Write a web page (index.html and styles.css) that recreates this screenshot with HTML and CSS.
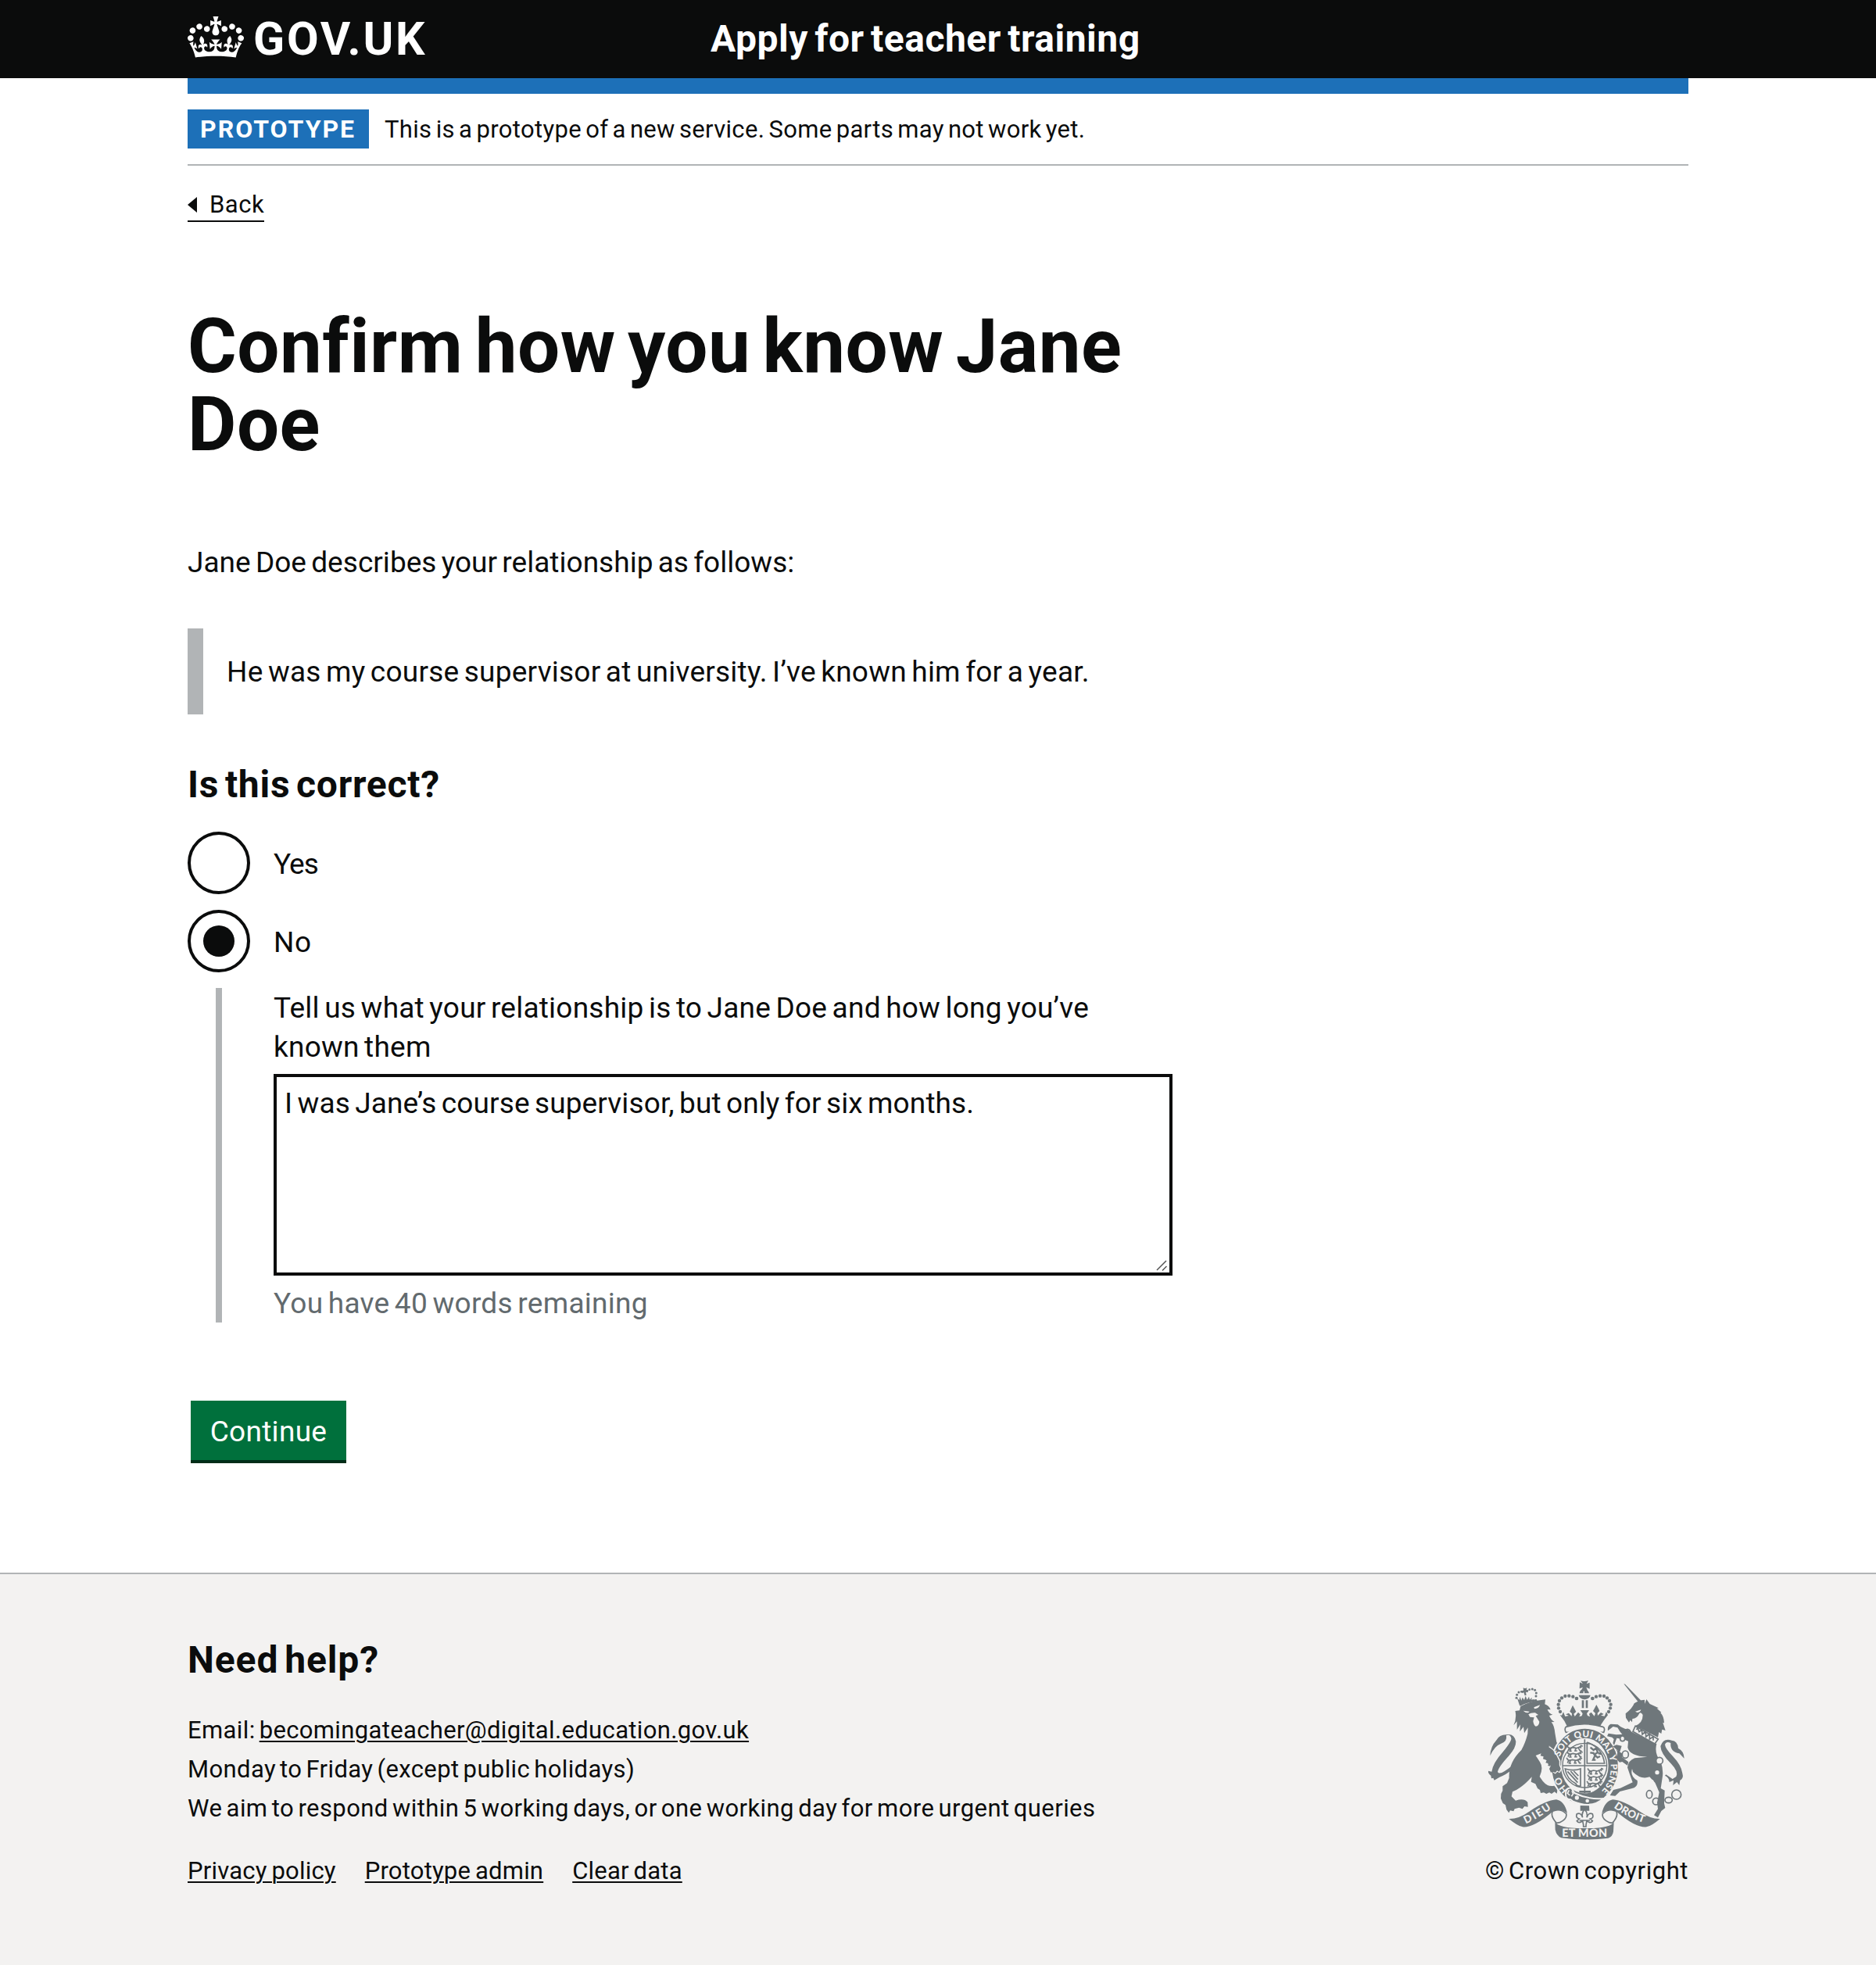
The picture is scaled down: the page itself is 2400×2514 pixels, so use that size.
FILE: index.html
```html
<!DOCTYPE html>
<html lang="en">
<head>
<meta charset="utf-8">
<title>Confirm how you know Jane Doe - Apply for teacher training</title>
<link rel="stylesheet" href="styles.css">
</head>
<body>
<header class="header">
  <div class="container header-row">
    <a class="logo" href="#">
      <svg class="crown" viewBox="0 0 132 97" aria-hidden="true"><path fill="currentColor" fill-rule="evenodd" d="M25 30.2c3.5 1.5 7.7-.2 9.1-3.7 1.5-3.6-.2-7.8-3.9-9.2-3.6-1.4-7.6.3-9.1 3.9-1.4 3.5.3 7.5 3.9 9zM9 39.5c3.6 1.5 7.8-.2 9.2-3.7 1.5-3.6-.2-7.8-3.9-9.1-3.6-1.5-7.6.2-9.1 3.8-1.4 3.5.3 7.5 3.8 9zM4.4 57.2c3.5 1.5 7.7-.2 9.1-3.8 1.5-3.6-.2-7.7-3.9-9.1-3.5-1.5-7.6.3-9.1 3.8-1.4 3.5.3 7.6 3.9 9.1zm38.3-21.4c3.5 1.5 7.7-.2 9.1-3.8 1.5-3.6-.2-7.7-3.9-9.1-3.6-1.5-7.6.3-9.1 3.8-1.3 3.6.4 7.7 3.9 9.1zm64.4-5.6c-3.6 1.5-7.8-.2-9.1-3.7-1.5-3.6.2-7.8 3.8-9.2 3.6-1.4 7.7.3 9.2 3.9 1.3 3.5-.4 7.5-3.9 9zm15.9 9.3c-3.6 1.5-7.7-.2-9.1-3.7-1.5-3.6.2-7.8 3.7-9.1 3.6-1.5 7.7.2 9.2 3.8 1.5 3.5-.3 7.5-3.8 9zm4.7 17.7c-3.6 1.5-7.8-.2-9.2-3.8-1.5-3.6.2-7.7 3.9-9.1 3.6-1.5 7.7.3 9.2 3.8 1.3 3.5-.4 7.6-3.9 9.1zM89.3 35.8c-3.6 1.5-7.8-.2-9.2-3.8-1.4-3.6.2-7.7 3.9-9.1 3.6-1.5 7.7.3 9.2 3.8 1.4 3.6-.3 7.7-3.9 9.1zM69.7 17.7l8.9 4.7V9.3l-8.9 2.8c-.2-.3-.5-.6-.9-.9L72.4 0H59.6l3.5 11.2c-.3.3-.6.5-.9.9l-8.8-2.8v13.1l8.8-4.7c.3.3.6.7.9.9l-5 15.4v.1c-.2.8-.4 1.6-.4 2.4 0 4.1 3.1 7.5 7 8.1h.2c.3 0 .7.1 1 .1.4 0 .7 0 1-.1h.2c4-.6 7.1-4.1 7.1-8.1 0-.8-.1-1.7-.4-2.4V34l-5.1-15.4c.4-.2.7-.6 1-.9zM66 92.8c16.9 0 32.8 1.1 47.1 3.2 4-16.9 8.9-26.7 14-33.5l-9.6-3.4c1 4.9 1.1 7.2 0 10.2-1.5-1.4-3-4.3-4.2-8.7L108.6 76c2.8-2 5-3.2 7.5-3.3-4.4 9.4-10 11.9-13.6 11.2-4.3-.8-6.3-4.6-5.6-7.9 1-4.7 5.7-5.9 8-.5 4.3-8.7-3-11.4-7.6-8.8 7.1-7.2 7.9-13.5 2.1-21.1-8 6.1-8.1 12.3-4.5 20.8-4.7-5.4-12.1-2.5-9.5 6.2 3.4-5.2 7.9-2 7.2 3.1-.6 4.3-6.4 7.8-13.5 7.2-10.3-.9-10.9-8-11.2-13.8 2.5-.5 7.1 1.8 11 7.3L80.2 60c-4.1 4.4-8 5.3-12.3 5.4 1.4-4.4 8-11.6 8-11.6H55.5s6.4 7.2 7.9 11.6c-4.2-.1-8-1-12.3-5.4l1.4 16.4c3.9-5.5 8.5-7.7 10.9-7.3-.3 5.8-.9 12.8-11.1 13.8-7.2.6-12.9-2.9-13.5-7.2-.7-5 3.8-8.3 7.1-3.1 2.7-8.7-4.6-11.6-9.4-6.2 3.7-8.5 3.6-14.7-4.6-20.8-5.8 7.6-5 13.9 2.2 21.1-4.7-2.6-11.9.1-7.7 8.8 2.3-5.5 7.1-4.2 8.1.5.7 3.3-1.3 7.1-5.7 7.9-3.5.7-9-1.8-13.5-11.2 2.5.1 4.7 1.3 7.5 3.3l-4.7-15.4c-1.2 4.4-2.7 7.2-4.3 8.7-1.1-3-.9-5.3 0-10.2l-9.5 3.4c5 6.9 9.9 16.7 14 33.5 14.8-2.1 30.8-3.2 47.7-3.2z"/></svg>
      <span class="logo-text">GOV.UK</span>
    </a>
    <a class="service-name" href="#">Apply for teacher training</a>
  </div>
</header>
<div class="container">
  <div class="header-bar"></div>
  <div class="phase-banner">
    <strong class="tag">PROTOTYPE</strong>
    <span class="phase-text">This is a prototype of a new service. Some parts may not work yet.</span>
  </div>
  <a class="back-link" href="#"><svg class="back-arrow" viewBox="0 0 12 20" aria-hidden="true"><path d="M12 0v20L0 10z"/></svg><span>Back</span></a>
  <main class="main">
    <h1>Confirm how you know Jane Doe</h1>
    <p class="intro">Jane Doe describes your relationship as follows:</p>
    <blockquote class="inset">He was my course supervisor at university. I’ve known him for a year.</blockquote>
    <h2 class="question">Is this correct?</h2>
    <div class="radios">
      <label class="radio"><span class="radio-circle"></span><span class="radio-label radio-yes">Yes</span></label>
      <label class="radio"><span class="radio-circle radio-checked"></span><span class="radio-label">No</span></label>
    </div>
    <div class="conditional">
      <label class="detail-label" for="detail">Tell us what your relationship is to Jane Doe and how long you’ve known them</label>
      <div class="textarea-wrap">
        <textarea id="detail" class="textarea">I was Jane’s course supervisor, but only for six months.</textarea>
        <svg class="grip" viewBox="0 0 14 14" aria-hidden="true"><path d="M1 13L13 1M8 13.500L13.500 8"/></svg>
      </div>
      <div class="count">You have 40 words remaining</div>
    </div>
    <button class="button">Continue</button>
  </main>
</div>
<footer class="footer">
  <div class="container footer-row">
    <div>
      <h2 class="help">Need help?</h2>
      <ul class="contact">
        <li>Email: <a class="email" href="#">becomingateacher@digital.education.gov.uk</a></li>
        <li>Monday to Friday (except public holidays)</li>
        <li class="aim">We aim to respond within 5 working days, or one working day for more urgent queries</li>
      </ul>
      <nav class="links"><a href="#">Privacy policy</a><a href="#">Prototype admin</a><a href="#">Clear data</a></nav>
    </div>
    <div class="copyright">
      <svg class="crest" viewBox="56 49 780 636" aria-hidden="true">
        <defs>
          <path id="garter" d="M342 357A101 117 0 1 1 500 487"/>
          <path id="garter-start" d="M376 481A100 116 0 0 1 339 400"/>
          <path id="scroll-left" d="M212 611Q262 588 314 551"/>
          <path id="scroll-right" d="M549 548Q605 590 680 612"/>
          <g id="passant" fill="none" stroke-width="5"><path d="M2 5l9 5 12-3 14 3 12-5 6 4M8 11l-4 9M16 9l-5 12h7M34 10l-3 10h8M44 9l6 11h6M50 6l4-6 6 3M4 4l-4-4"/></g>
        </defs>
        <g class="ink">
          <!-- small crown on the lion -->
          <path d="M182 138l-3-9 8 7 2-13 6 15 4-12 7 10 5-16 6 15 7-12 3 12 8-9-1 11 8-5-2 10q-28 2-52 14z"/>
          <path d="M202 89l7 3 7-3-1 8 8 1-4 9-7-2 2 12-6 2-4-12-7 3-1-9 7-2z"/>
          <g><circle cx="176" cy="128" r="4.500"/><circle cx="178" cy="116" r="4.500"/><circle cx="185" cy="106" r="4.500"/><circle cx="195" cy="104" r="4"/><circle cx="226" cy="96" r="4"/><circle cx="237" cy="94" r="4.500"/><circle cx="247" cy="98" r="4.500"/><circle cx="252" cy="109" r="4.500"/><circle cx="251" cy="121" r="4.500"/></g>
          <path d="M187 151q31-14 66-18l3 7q-36 4-66 19z"/>
          <!-- lion -->
          <path d="M171 178l17-2 4-16q34-18 74-23l21-3-2 18q17 6 22 21l-12-1q5 16 20 20l-13 4q6 16 20 24l-12 1q11 12 14 42l6 35 12 15-12 12-10 2-20-17q25 36 40 53l4 26 10 13-6 15-8-3-11 5-8-5-10 1-4-10 3-14-14-3 6-8-14-3 4-10-14-5 2-9-12-3 3-9-21 8 16 25q15 22-1 56l12 17q20 24 44 18l13 13-3 17-9-7-11 8-9-5-11 5-10-5-12 2-3-12-9-6-8-17-17-8 3-19q-37 42-74 57l-4 18 16 16q32-11 46 6l1 18-13-2-8 10-13-5-17 5-4 9-13-3-5 9-9-12-4-18-10-7-8-18 1-18 6-12 0-17 17-12 8-20q-3-59 47-107 15-26 24-62l1-24-14 21-3-24-14 18 2-27-13 20 0-32-13 15q12-24 7-53z"/>
          <path d="M75 350q1-35 25-61 10-19 37-20 30-6 37 26 1 24-28 56-39 42-42 60 5 19 59-26l4 13q-35 28-56 34l-20 12-4-9-7 2-2-11q-12-9-10-18l13 3q5-34 44-77 34-42 31-52-5-17-19-10 4 24-20 31-25 9-42 47z"/>
          <g class="cut"><path d="M202 177l24 3q-8 11-24-3zM243 164l23-9q-3 14-21 15zM222 191q9-7 26-6l12 8-10 4 14 22q-1 17-14 18-8-4-10-20l4-14-16-2z"/></g>
          <!-- unicorn -->
          <path d="M588 74l5 1 76 78-13 6z"/>
          <path d="M668 151l7-18 13 18 34 16-7 1 17 15-3 2q13 14 14 39l-5-1 10 30-13-4-3 16-9-6-4 20-87-44q29-11 29-42-9-16-16-1-6 13-24 16l-1 13-7-8-5 9-12-18-1-16q26-20 33-39 14-12 40-14z"/>
          <path class="cut" d="M632 180l22-7q-2 10-14 11z"/>
          <path d="M624 261l90 43q-10 38 16 68 10 30 7 56l-7 47 15 8-2 50 4 17-15 12-13 25-15-9 15-24-3-24 8-40-16-37-21-22q-33 12-64-19l-3-12q-9 28 20 45 4 25-20 30l-47 12-18 17-20-2 13-21 27-7 47-22q-12-33-20-57 3-27 28-36l48-5q-68-3-75-36l2-24-19-8-25-4-7 19-5 15 17 16 18 10-4 13-19-15-19-22 8-32-7-7-19-4 5-11 30 5 23-1q-10-11-18-26l-17-4-20 16q-3-20 11-26l27 2q16 15 38 19z"/>
          <path d="M820 360q-1-28-23-39-3-29-25-30-32-11-43 22 1 29 40 67 30 31 20 50l-14 9-25-17-4 4q17 8 17 25l16-7-2 19 15-12 9 12 3-19q15-7 9-27-4-30-36-64-30-31-31-46 5-15 22-6-3 34 33 40z"/>
          <g class="line" stroke-width="5"><path d="M632 236l88 50-13 18-84-47z" class="cut-fill"/><path d="M637 250l4-8 6 16 10-8 2 18 13-11 1 20 14-11 0 20 14-9 0 14"/><ellipse cx="602" cy="261" rx="12" ry="13"/><ellipse cx="583" cy="284" rx="9" ry="10" class="cut-fill"/><circle cx="725" cy="369" r="13" class="cut-fill"/><ellipse cx="686" cy="498" rx="11" ry="15"/><circle cx="712" cy="525" r="13"/><circle cx="790" cy="499" r="18"/><ellipse cx="760" cy="520" rx="14" ry="11"/></g>
          <g class="cut"><circle cx="716" cy="414" r="8"/><circle cx="694" cy="450" r="9"/></g>
          <!-- crown -->
          <path d="M422 62q15 5 30-1l-7 13 12-5v24l-13-6 6 15h-27l8-15-13 5 1-24 12 6zM418 110q1-13 15-17v17zM437 93q15 4 18 17h-18zM415 117h45q-2 14-22 17-20-3-23-17zM427 137h8v30h-8zM442 137h8v30h-8z"/>
          <g><circle cx="407" cy="130" r="7"/><circle cx="393" cy="123" r="6.500"/><circle cx="378" cy="120" r="6.500"/><circle cx="363" cy="121" r="6.500"/><circle cx="350" cy="128" r="6.500"/><circle cx="341" cy="139" r="6.500"/><circle cx="337" cy="153" r="6.500"/><circle cx="338" cy="167" r="6.500"/><circle cx="344" cy="181" r="6.500"/><circle cx="468" cy="130" r="7"/><circle cx="482" cy="123" r="6.500"/><circle cx="497" cy="120" r="6.500"/><circle cx="512" cy="121" r="6.500"/><circle cx="524" cy="128" r="6.500"/><circle cx="533" cy="139" r="6.500"/><circle cx="538" cy="153" r="6.500"/><circle cx="536" cy="167" r="6.500"/><circle cx="530" cy="181" r="6.500"/></g>
          <path d="M350 195l6-13 7 17 14-3-12-5 12-5 11 12 1-10-8-8 4-9 7-15 8 15 5 10-9 8 4 10 13-16 8 8-4 9 10-3 3-9-9-13h34l-9 13 3 8 9 4-3-11 8-6 12 15 4-11-9-9 5-9 8-15 8 15 4 9-8 8 1 10 12-12 11 6-11 5 14 3 7-17 6 13q-22 27-30 44-62-21-126 0-9-22-28-45z"/>
          <path class="line cut-fill" stroke-width="5" d="M366 239q70-22 142 0 10 5 3 21h-145q-7-13 0-21z"/>
          <!-- garter and shield -->
          <ellipse class="rim" cx="439" cy="391" rx="130" ry="148"/>
          <ellipse class="cut" cx="438" cy="388" rx="91" ry="106"/>
          <circle class="line" cx="438" cy="387" r="85" stroke-width="4"/>
          <path class="line" stroke-width="5" d="M438 287v206M353 388h171M447 298v81h67q-8-60-67-81"/>
          <g class="line" stroke-width="5"><use href="#passant" x="370" y="311"/><use href="#passant" x="370" y="334"/><use href="#passant" x="368" y="358"/><use href="#passant" x="449" y="399"/><use href="#passant" x="449" y="423"/><use href="#passant" x="446" y="448"/><path stroke-width="7" d="M460 318l12 10 10-7 6 16-13 8 12 12 10-5M475 340l-16-2M478 348l-8 18h10M490 340l12 3"/><path d="M363 400q32 10 59 0v66q-16 2-18-9-35-17-41-57zM372 410l39 43M384 409l28 32M396 409l18 18"/></g>
          <path d="M417 484h44v8h-44z"/>
          <path class="rim" d="M366 487q5-17 21-13l12 19q50 25 111 21-46 41-117 11l-9-7q-23 2-18-31z"/>
          <g class="cut"><circle cx="408" cy="511" r="8"/><circle cx="448" cy="523" r="7"/></g>
          <path class="line cut-stroke" stroke-width="5" d="M378 482l-6 12 9 8M389 485l5 11-7 10"/>
          <!-- paw and hoof resting on the garter -->
          <path class="line cut-stroke" stroke-width="6" d="M300 316L318 330 330 346 342 370 342 386 348 400 341 412 332 408 325 416 318 412"/>
          <path d="M286 306L316 328 328 346 340 370 340 386 346 400 340 412 332 407 325 415 318 411 308 414 302 400 308 388 296 382 303 374 290 366 284 340z"/>
          <path d="M546 314l14-6 20 4-8 26 10 18 24 18-4 13-20-14-10 2-14-14 8-30z"/>
          <ellipse class="line cut-fill" stroke-width="5" cx="594" cy="345" rx="12" ry="14"/>
          <path d="M421 541l34 1 1 19h-35z"/>
          <path class="line cut-fill" stroke-width="5" d="M438 556q13 14 8 31 7-21 22-14 6 17-9 19l9 8q-8 12-22 0l-3 15 0 7h-10v-7l-3-15q-14 12-22 0l9-8q-15-3-9-19 15-7 22 14-6-18 8-31zM418 598h40"/>
          <!-- motto scroll -->
          <path d="M147 592q37 1 78-28 66-44 104-46 31 5 42 52-28-20-56-6-72 62-115 59-17-2-53-31z"/>
          <path d="M727 592q-36 1-77-28-66-44-104-46-31 5-42 52 28-20 56-6 72 62 115 59 18-2 52-31z"/>
          <g class="line" stroke-width="5"><path class="cut-fill" d="M315 563q28-13 52 9 5 20-25 34l-12 2q-25-27-15-45zM559 563q-28-13-52 9-5 20 25 34l12 2q25-27 15-45z"/></g>
          <path d="M324 603q14 26 113 25 103 1 113-25l-2 38q-3 20-20 25-92 12-180-1-18-8-23-31z"/>
        </g>
        <g class="motto"><text font-size="35"><textPath href="#garter" startOffset="3" textLength="400">SOIT QUI MAL Y PENSE</textPath></text><text font-size="36"><textPath href="#garter-start" startOffset="1" textLength="60">HO</textPath></text><text font-size="40"><textPath href="#scroll-left" textLength="114">DIEU</textPath></text><text font-size="40"><textPath href="#scroll-right" textLength="130">DROIT</textPath></text><text x="351" y="662" font-size="43" textLength="173">ET MON</text></g>
      </svg>
      <a class="copy-text" href="#">© Crown copyright</a>
    </div>
  </div>
</footer>
</body>
</html>
```
FILE: styles.css
```css
* { box-sizing: border-box; }
body {
  margin: 0;
  min-height: 2514px;
  display: flex;
  flex-direction: column;
  background: #fff;
  color: #0b0c0c;
  font: 37px/50px Roboto, "Liberation Sans", sans-serif;
  letter-spacing: .03px;
  word-spacing: -3px;
}
a { color: inherit; }
h1, h2, p, ul, blockquote { margin: 0; padding: 0; }
.container { width: 1920px; margin: 0 auto; }

.header { background: #0b0c0c; color: #fff; }
.header-row { display: flex; height: 100px; }
.header a { text-decoration: none; }
.logo { display: flex; width: 669px; }
.crown { width: 72px; height: 53px; margin-top: 21px; }
.logo-text { margin-left: 12px; padding-top: 1px; font-size: 59px; line-height: 98px; font-weight: 700; letter-spacing: 2.7px; }
.service-name { font-size: 48px; line-height: 99px; font-weight: 700; letter-spacing: .5px; word-spacing: -4px; }
.header-bar { height: 20px; background: #1d70b8; }

.phase-banner { display: flex; align-items: center; padding: 20px 0; border-bottom: 2px solid #b1b4b6; }
.tag { width: 232px; height: 50px; padding-left: 16px; background: #1d70b8; color: #fff; font-size: 32px; font-weight: 700; letter-spacing: 2px; }
.phase-text { height: 50px; padding-top: 1px; margin-left: 20px; font-size: 31px; letter-spacing: .33px; word-spacing: -2.8px; }
.back-link { display: flex; width: max-content; align-items: center; margin-top: 30px; border-bottom: 2px solid #0b0c0c; font-size: 31px; line-height: 40px; letter-spacing: .5px; text-decoration: none; }
.back-arrow { width: 12px; height: 20px; margin-right: 16px; fill: #0b0c0c; }

.main { display: flex; flex-direction: column; align-items: flex-start; width: 1260px; padding: 109px 0 140px; }
h1 { font-size: 96px; line-height: 100px; letter-spacing: .5px; word-spacing: -9px; }
.intro { margin-top: 102px; }
.inset { margin-top: 59px; padding: 31px 30px 29px; border-left: 20px solid #b1b4b6; letter-spacing: .23px; }
.question { margin-top: 60px; font-size: 48px; line-height: 60px; letter-spacing: .75px; word-spacing: -5px; }
.radios { display: grid; gap: 20px; margin-top: 30px; }
.radio { display: flex; align-items: center; gap: 30px; }
.radio-circle { display: grid; place-items: center; width: 80px; height: 80px; border: 4px solid #0b0c0c; border-radius: 50%; }
.radio-checked::before { content: ""; width: 40px; height: 40px; border-radius: 50%; background: #0b0c0c; }
.radio-label { padding-top: 3px; letter-spacing: .5px; }
.radio-yes { letter-spacing: -1px; }
.conditional { width: 1224px; margin: 20px 0 0 36px; padding: 1px 0 0 66px; border-left: 8px solid #b1b4b6; }
.detail-label { display: block; letter-spacing: .23px; }
.textarea-wrap { position: relative; margin-top: 9px; }
.textarea { display: block; width: 1150px; height: 258px; margin: 0; padding: 9px 10px; border: 4px solid #0b0c0c; border-radius: 0; color: #0b0c0c; background: #fff; font: inherit; letter-spacing: .12px; word-spacing: -3px; resize: none; }
.grip { position: absolute; left: 1129px; top: 238px; width: 14px; height: 14px; fill: none; stroke: #555; stroke-width: 1.5; }
.count { height: 49px; margin-top: 11px; color: #626a6e; letter-spacing: .27px; }
.button { width: 199px; height: 76px; margin: 100px 0 4px 4px; padding: 3px 0 0; border: 0; background: #00703c; color: #fff; box-shadow: 0 4px 0 #002d18; font: inherit; letter-spacing: .3px; }

.footer { flex: 1; padding-top: 80px; border-top: 2px solid #b1b4b6; background: #f3f2f1; font-size: 31px; letter-spacing: .39px; }
.footer a { text-decoration-thickness: 2px; text-underline-offset: 3px; }
.footer-row { display: flex; justify-content: space-between; }
.help { font-size: 48px; line-height: 60px; letter-spacing: .9px; word-spacing: -5px; }
.contact { margin-top: 35px; list-style: none; }
.email { letter-spacing: .35px; }
.aim { letter-spacing: .42px; word-spacing: -2.8px; }
.links { display: flex; gap: 37px; margin-top: 30px; letter-spacing: .2px; word-spacing: -2px; }
.copyright { display: flex; flex-direction: column; align-items: flex-end; padding-top: 52px; }
.crest { width: 260px; height: 212px; margin-bottom: 11px; }
.footer .copy-text { text-decoration: none; letter-spacing: .55px; }
.ink { fill: #6f777b; }
.cut { fill: #f3f2f1; }
.line { fill: none; stroke: #6f777b; }
.cut-fill { fill: #f3f2f1; }
.cut-stroke { stroke: #f3f2f1; }
.rim { stroke: #f3f2f1; stroke-width: 6px; }
.motto { fill: #f3f2f1; font-family: Lato, sans-serif; font-weight: 900; letter-spacing: 0; word-spacing: 0; text-rendering: geometricPrecision; }
```
